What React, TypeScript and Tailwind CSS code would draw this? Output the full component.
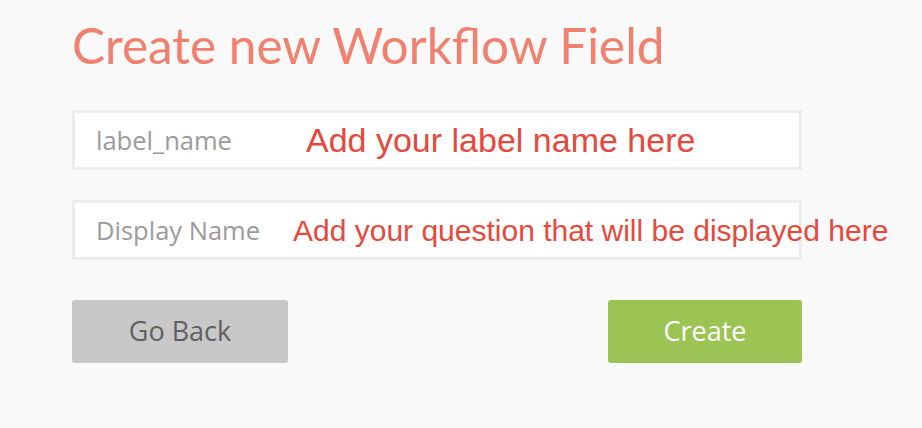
export default function App() {
  return (
    <div className="min-h-[428px] w-full bg-[#f9f9f9] pl-[72px] pt-[15px] font-['Open_Sans',sans-serif]">
      <h1 className="font-[Lato,sans-serif] text-[49.5px] leading-[60px] tracking-[0px] text-[#f2806f]">
        Create new Workflow Field
      </h1>
      <div className="mt-[35px] flex w-[730px] flex-col gap-[30px]">
        <div className="flex h-[60px] items-center border-[3px] border-[#ececec] bg-white pl-[21px]">
          <span className="w-[210px] shrink-0 text-[25.5px] text-[#9b9b9b]">label_name</span>
          <span className="whitespace-nowrap font-['Liberation_Sans',Arial,sans-serif] text-[34px] text-[#e8483c]">
            Add your label name here
          </span>
        </div>
        <div className="flex h-[60px] items-center border-[3px] border-[#ececec] bg-white pl-[21px]">
          <span className="w-[197px] shrink-0 text-[25.5px] text-[#9b9b9b]">Display Name</span>
          <span className="whitespace-nowrap font-['Liberation_Sans',Arial,sans-serif] text-[30px] text-[#e8483c]">
            Add your question that will be displayed here
          </span>
        </div>
      </div>
      <div className="mt-[40px] flex w-[730px] justify-between">
        <button className="flex h-[63px] w-[216px] items-center justify-center rounded-[3px] bg-[#c8c8c8] text-[27px] text-[#606060]">
          Go Back
        </button>
        <button className="flex h-[63px] w-[194px] items-center justify-center rounded-[3px] bg-[#9bc454] text-[27px] text-white">
          Create
        </button>
      </div>
    </div>
  );
}
